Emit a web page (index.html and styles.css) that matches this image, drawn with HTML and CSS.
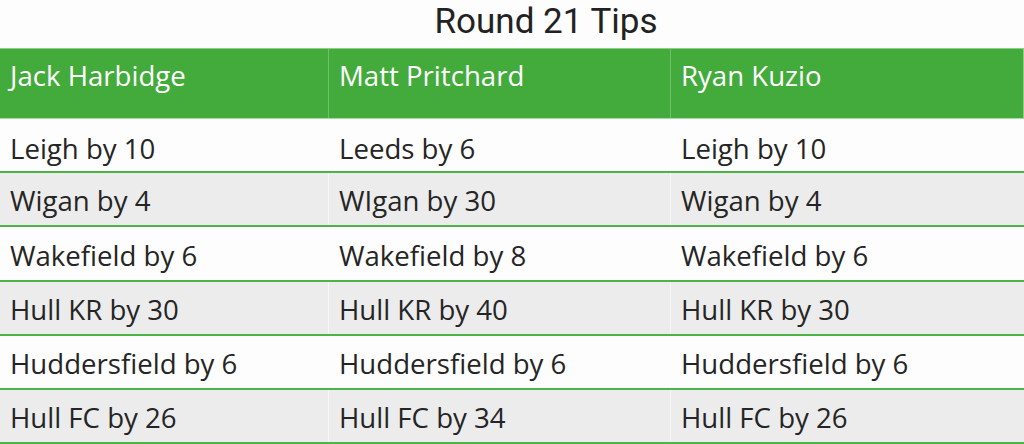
FILE: index.html
```html
<!DOCTYPE html>
<html>
<head>
<meta charset="utf-8">
<link rel="stylesheet" href="styles.css">
</head>
<body>
<div class="page">
  <h1 class="title">Round 21 Tips</h1>
  <div class="tips">
    <div class="row head">
      <div class="cell">Jack Harbidge</div>
      <div class="cell">Matt Pritchard</div>
      <div class="cell">Ryan Kuzio</div>
    </div>
    <div class="row">
      <div class="cell">Leigh by 10</div>
      <div class="cell">Leeds by 6</div>
      <div class="cell">Leigh by 10</div>
    </div>
    <div class="row alt">
      <div class="cell">Wigan by 4</div>
      <div class="cell">WIgan by 30</div>
      <div class="cell">Wigan by 4</div>
    </div>
    <div class="row tall">
      <div class="cell">Wakefield by 6</div>
      <div class="cell">Wakefield by 8</div>
      <div class="cell">Wakefield by 6</div>
    </div>
    <div class="row alt">
      <div class="cell">Hull KR by 30</div>
      <div class="cell">Hull KR by 40</div>
      <div class="cell">Hull KR by 30</div>
    </div>
    <div class="row">
      <div class="cell">Huddersfield by 6</div>
      <div class="cell">Huddersfield by 6</div>
      <div class="cell">Huddersfield by 6</div>
    </div>
    <div class="row alt">
      <div class="cell">Hull FC by 26</div>
      <div class="cell">Hull FC by 34</div>
      <div class="cell">Hull FC by 26</div>
    </div>
  </div>
</div>
</body>
</html>
```
FILE: styles.css
```css
html, body {
  margin: 0;
  padding: 0;
  background: #fdfdfd;
}
.page {
  width: 1024px;
  height: 444px;
  overflow: hidden;
}
.title {
  margin: 0;
  height: 48px;
  display: flex;
  align-items: center;
  justify-content: center;
  padding-left: 68px;
  font-family: Roboto, "Liberation Sans", sans-serif;
  font-weight: 400;
  font-size: 35px;
  color: #222;
  box-sizing: border-box;
  padding-bottom: 6px;
}
.tips {
  font-family: "Open Sans", "Noto Sans", sans-serif;
  font-size: 27.6px;
  color: #252525;
}
.row {
  display: grid;
  grid-template-columns: 328px 342px 1fr;
  height: 52px;
  border-bottom: 2px solid #4cb446;
  background: #fdfdfd;
}
.row.tall {
  height: 53px;
}
.row.alt {
  background: #ececec;
}
.row.head {
  height: 69px;
  background: #43ab3c;
  color: #fff;
  border-top: 1px solid #8ccf87;
  border-bottom: 1px solid #a9dca5;
  border-right: 1px solid #8ccf87;
}
.cell {
  display: flex;
  align-items: center;
  padding-left: 10px;
  padding-top: 2px;
  border-left: 1px solid rgba(255,255,255,0.5);
  white-space: nowrap;
}
.row:nth-child(2) .cell {
  padding-top: 5px;
}
.cell:first-child {
  border-left: none;
}
.head .cell {
  align-items: flex-start;
  padding-top: 7px;
  border-left-color: #6ec068;
}
```
